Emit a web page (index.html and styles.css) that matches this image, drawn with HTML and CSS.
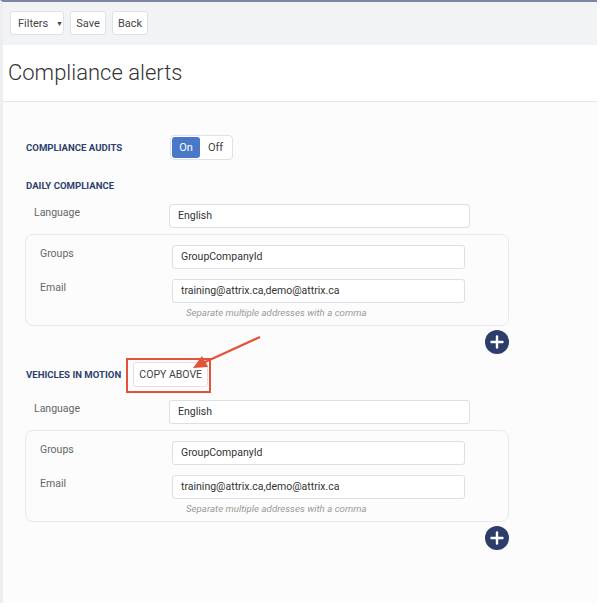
FILE: index.html
```html
<!DOCTYPE html>
<html lang="en">

<head>
    <meta charset="UTF-8">
    <title>Compliance alerts</title>
    <link rel="stylesheet" href="styles.css">
</head>

<body>
    <div class="app">
        <div class="toolbar">
            <button class="btn" id="filters">Filters <span class="caret">&#9660;</span></button>
            <button class="btn" id="save">Save</button>
            <button class="btn" id="back">Back</button>
        </div>
        <div class="page-header">
            <h1>Compliance alerts</h1>
        </div>
        <div class="content">
            <div class="row audits">
                <div class="section-title col-label">Compliance audits</div>
                <div class="toggle">
                    <div class="toggle-item active">On</div>
                    <div class="toggle-item">Off</div>
                </div>
            </div>

            <div class="section-title daily">Daily compliance</div>
            <div class="field lang">
                <label>Language</label>
                <div class="input">English</div>
            </div>
            <div class="group-box">
                <div class="field">
                    <label>Groups</label>
                    <div class="input">GroupCompanyId</div>
                </div>
                <div class="field">
                    <label>Email</label>
                    <div class="input">training@attrix.ca,demo@attrix.ca</div>
                </div>
                <div class="hint">Separate multiple addresses with a comma</div>
            </div>
            <div class="add-row">
                <div class="add-btn">
                    <svg width="24" height="24" viewBox="0 0 24 24">
                        <circle cx="12" cy="12" r="12" fill="#2c3d6b" />
                        <path d="M12 6.5v11M6.5 12h11" stroke="#fff" stroke-width="2.4" stroke-linecap="round" />
                    </svg>
                </div>
            </div>

            <div class="row motion">
                <div class="section-title">Vehicles in motion</div>
                <button class="btn copy">COPY ABOVE</button>
            </div>
            <div class="field lang">
                <label>Language</label>
                <div class="input">English</div>
            </div>
            <div class="group-box">
                <div class="field">
                    <label>Groups</label>
                    <div class="input">GroupCompanyId</div>
                </div>
                <div class="field">
                    <label>Email</label>
                    <div class="input">training@attrix.ca,demo@attrix.ca</div>
                </div>
                <div class="hint">Separate multiple addresses with a comma</div>
            </div>
            <div class="add-row">
                <div class="add-btn">
                    <svg width="24" height="24" viewBox="0 0 24 24">
                        <circle cx="12" cy="12" r="12" fill="#2c3d6b" />
                        <path d="M12 6.5v11M6.5 12h11" stroke="#fff" stroke-width="2.4" stroke-linecap="round" />
                    </svg>
                </div>
            </div>
        </div>

        <svg class="arrow" width="80" height="45" viewBox="0 0 80 45">
            <line x1="75" y1="2" x2="18" y2="28" stroke="#e2533a" stroke-width="2.2" />
            <polygon points="8,33 17,21 23,32" fill="#e2533a" />
        </svg>
    </div>
</body>

</html>
```

FILE: styles.css
```css
body {
    margin: 0;
    padding: 0;
    background-color: #ffffff;
    font-family: Roboto, "Liberation Sans", sans-serif;
    color: #333;
}

.app {
    position: relative;
    box-sizing: border-box;
    width: 597px;
    height: 603px;
    border-top: 2px solid #7b86a6;
    border-left: 3px solid #eceef1;
    background-color: #fcfcfc;
}

.toolbar {
    display: flex;
    flex-direction: row;
    gap: 6px;
    height: 43px;
    box-sizing: border-box;
    padding: 9px 0 0 7px;
    background-color: #f2f3f5;
}

.btn {
    height: 24px;
    padding: 0 8px;
    border: 1px solid #dfe1e6;
    border-radius: 3px;
    background-color: #fff;
    font-family: Roboto, "Liberation Sans", sans-serif;
    font-size: 11px;
    color: #444;
}

#filters {
    width: 54px;
    padding: 0 0 0 7px;
    text-align: left;
}

#save,
#back {
    width: 36px;
    padding: 0;
}

.caret {
    font-size: 7px;
    margin-left: 5px;
    position: relative;
    top: -1px;
}

.page-header {
    height: 57px;
    box-sizing: border-box;
    background-color: #fff;
    border-bottom: 1px solid #e3e5e9;
    padding: 15px 0 0 5px;
}

.page-header h1 {
    margin: 0;
    font-size: 22px;
    font-weight: 300;
    color: #333;
}

.content {
    padding-left: 22px;
    width: 484px;
}

.row {
    display: flex;
    flex-direction: row;
    align-items: center;
}

.audits {
    margin-top: 33px;
}

.section-title {
    padding-left: 1px;
    font-size: 9.6px;
    font-weight: 700;
    text-transform: uppercase;
    color: #2e3f6e;
}

.col-label {
    width: 144px;
}

.toggle {
    display: flex;
    flex-direction: row;
    padding: 1px;
    border: 1px solid #dfe1e6;
    border-radius: 4px;
    background-color: #fff;
}

.toggle-item {
    width: 31px;
    height: 21px;
    line-height: 21px;
    text-align: center;
    font-size: 11px;
    color: #444;
}

.toggle-item.active {
    width: 28px;
    border-radius: 3px;
    background-color: #4a78c9;
    color: #fff;
}

.daily {
    margin-top: 20px;
}

.field {
    display: flex;
    flex-direction: row;
}

.field label {
    flex: none;
    padding-top: 2px;
    font-size: 10.5px;
    color: #666;
}

.input {
    box-sizing: border-box;
    height: 24px;
    line-height: 22px;
    padding-left: 8px;
    border: 1px solid #dde0e6;
    border-radius: 3px;
    background-color: #fff;
    font-size: 10.5px;
    color: #333;
}

.lang {
    margin-top: 13px;
}

.lang label {
    width: 135px;
    padding-left: 9px;
}

.lang .input {
    width: 301px;
}

.group-box {
    margin-top: 6px;
    height: 92px;
    box-sizing: border-box;
    padding: 10px 0 0 14px;
    border: 1px solid #e8e9ed;
    border-radius: 8px;
    background-color: #fcfcfc;
}

.group-box .field + .field {
    margin-top: 10px;
}

.group-box label {
    width: 132px;
}

.group-box .input {
    width: 293px;
}

.hint {
    margin: 4px 0 0 146px;
    font-size: 9.7px;
    font-style: italic;
    color: #9a9a9a;
}

.add-row {
    display: flex;
    justify-content: flex-end;
    margin-top: 4px;
}

.add-btn {
    width: 24px;
    height: 24px;
    cursor: pointer;
}

.add-btn svg {
    display: block;
}

.motion {
    margin-top: 8px;
}

.copy {
    position: relative;
    width: 75px;
    height: 25px;
    margin-left: 12px;
    padding: 0;
    font-size: 10.5px;
}

.copy::after {
    content: "";
    position: absolute;
    left: -8px;
    top: -5px;
    width: 81px;
    height: 31px;
    border: 2px solid #e2533a;
}

.arrow {
    position: absolute;
    left: 182px;
    top: 333px;
}
```
